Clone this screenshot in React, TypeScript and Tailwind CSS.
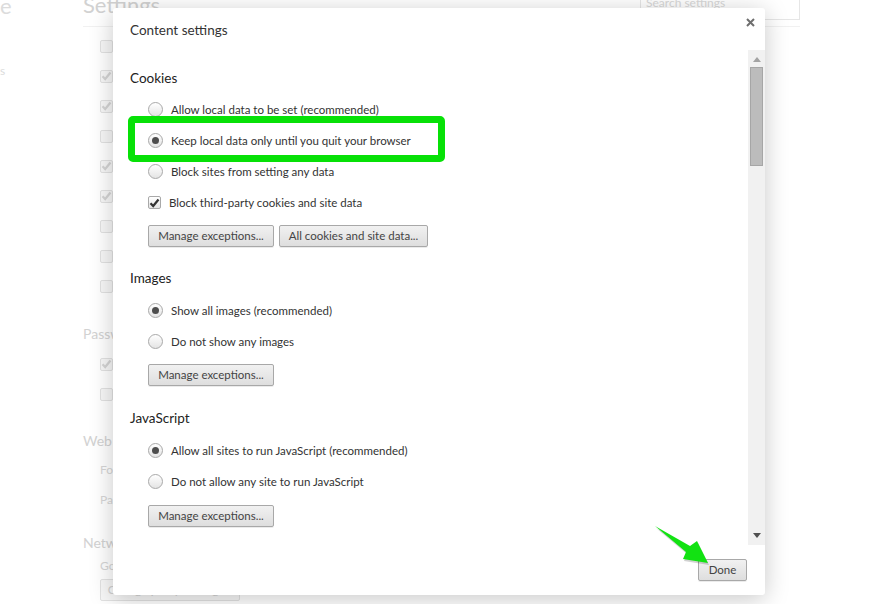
import React from "react";

function Radio({ checked }: { checked?: boolean }) {
  return (
    <span className="flex h-[15px] w-[15px] shrink-0 items-center justify-center rounded-full border border-[#a9a9a9] bg-linear-to-b from-white to-[#e4e4e4]">
      {checked && <span className="h-[7px] w-[7px] rounded-full bg-[#4d4d4d]" />}
    </span>
  );
}

function Check({ checked }: { checked?: boolean }) {
  return (
    <span className="flex h-[13px] w-[13px] shrink-0 items-center justify-center rounded-[2px] border border-[#a9a9a9] bg-linear-to-b from-white to-[#e4e4e4]">
      {checked && (
        <svg width="11" height="10" viewBox="0 0 11 10">
          <path d="M1.5 5.2 L4.2 8 L9.5 1.5" fill="none" stroke="#333" strokeWidth="2.2" />
        </svg>
      )}
    </span>
  );
}

function BgCheck({ checked }: { checked?: boolean }) {
  return (
    <div className="flex h-[30px] items-center">
      <span className="flex h-[13px] w-[13px] items-center justify-center rounded-[2px] border border-[#e2e2e2] bg-[#f7f7f7]">
        {checked && (
          <svg width="11" height="10" viewBox="0 0 11 10">
            <path d="M1.5 5.2 L4.2 8 L9.5 1.5" fill="none" stroke="#d4d4d4" strokeWidth="2.2" />
          </svg>
        )}
      </span>
      <span className="ml-[8px] text-[12px] text-[#d6d6d6]">Setting option</span>
    </div>
  );
}

function Btn({ children, w }: { children: React.ReactNode; w: string }) {
  return (
    <button
      className={`flex h-[22px] ${w} items-center justify-center rounded-[2px] border border-[#a8a8a8] bg-linear-to-b from-[#f1f1f1] to-[#dedede] text-[11.5px] text-[#444] shadow-[0_1px_0_rgba(0,0,0,0.08)]`}
    >
      {children}
    </button>
  );
}

function RadioRow({ label, checked }: { label: string; checked?: boolean }) {
  return (
    <div className="flex h-[31px] items-center pl-[18px]">
      <Radio checked={checked} />
      <span className="ml-[8px] text-[11.5px] text-[#333]">{label}</span>
    </div>
  );
}

function Heading({ children }: { children: React.ReactNode }) {
  return <div className="h-[20px] text-[13.5px] leading-[20px] text-[#222]">{children}</div>;
}

export default function App() {
  return (
    <div className="relative h-[604px] w-[885px] overflow-hidden bg-white font-['Lato',sans-serif]">
      {/* Background settings page (faded) */}
      <div className="flex">
        <div className="w-[83px] shrink-0">
          <div className="mt-[-9px] text-[22px] leading-[30px] text-[#dcdcdc]">e</div>
          <div className="mt-[41px] text-[12px] text-[#dcdcdc]">s</div>
        </div>
        <div className="w-[717px]">
          <div className="flex h-[27px] items-start justify-between border-b border-[#f1f1f1]">
            <div className="mt-[-10px] text-[22px] leading-[30px] text-[#d2d2d2]">Settings</div>
            <div className="mt-[-1px] flex h-[21px] w-[160px] items-center border border-[#e6e6e6] pl-[5px] text-[12px] text-[#d8d8d8]">
              <span className="mt-[-14px]">Search settings</span>
            </div>
          </div>
          <div className="pl-[17px] pt-[4px]">
            <BgCheck />
            <BgCheck checked />
            <BgCheck checked />
            <BgCheck />
            <BgCheck checked />
            <BgCheck checked />
            <BgCheck />
            <BgCheck />
            <BgCheck />
          </div>
          <div className="mt-[23px] h-[20px] text-[14px] leading-[20px] text-[#d2d2d2]">Passwords and forms</div>
          <div className="mt-[5px] pl-[17px]">
            <BgCheck checked />
            <BgCheck />
          </div>
          <div className="mt-[22px] h-[20px] text-[14px] leading-[20px] text-[#d2d2d2]">Web content</div>
          <div className="mt-[4px] pl-[17px] text-[12px] text-[#d6d6d6]">
            <div className="flex h-[30px] items-center">Font size:</div>
            <div className="flex h-[30px] items-center">Page zoom:</div>
          </div>
          <div className="mt-[18px] h-[20px] text-[14px] leading-[20px] text-[#d2d2d2]">Network</div>
          <div className="mt-[3px] pl-[17px]">
            <div className="flex h-[20px] items-center text-[12px] text-[#d6d6d6]">Google Chrome is using your computer's system proxy settings</div>
            <div className="mt-[3px] flex h-[22px] w-[140px] items-center justify-center rounded-[2px] border border-[#e2e2e2] bg-[#f7f7f7] text-[12px] text-[#d0d0d0]">
              Change proxy settings...
            </div>
          </div>
        </div>
      </div>

      {/* Dialog */}
      <div className="absolute left-[113px] top-[8px] flex h-[587px] w-[652px] flex-col rounded-[3px] bg-white shadow-[0_4px_24px_rgba(0,0,0,0.22)]">
        <div className="relative h-[42px] shrink-0 pl-[17px] pt-[12px]">
          <div className="text-[13.5px] leading-[20px] text-[#333]">Content settings</div>
          <svg className="absolute right-[10px] top-[10px]" width="9" height="9" viewBox="0 0 9 9">
            <path d="M1 1 L8 8 M8 1 L1 8" stroke="#6e6e6e" strokeWidth="2" />
          </svg>
        </div>
        <div className="flex h-[495px] shrink-0">
          <div className="flex-1 overflow-hidden pl-[17px] pt-[18px]">
            <Heading>Cookies</Heading>
            <div className="mt-[6px]">
              <RadioRow label="Allow local data to be set (recommended)" />
              <RadioRow label="Keep local data only until you quit your browser" checked />
              <RadioRow label="Block sites from setting any data" />
              <div className="flex h-[31px] items-center pl-[18px]">
                <Check checked />
                <span className="ml-[8px] text-[11.5px] text-[#333]">Block third-party cookies and site data</span>
              </div>
            </div>
            <div className="ml-[18px] mt-[7px] flex gap-[5px]">
              <Btn w="w-[126px]">Manage exceptions...</Btn>
              <Btn w="w-[149px]">All cookies and site data...</Btn>
            </div>

            <div className="mt-[21px]">
              <Heading>Images</Heading>
            </div>
            <div className="mt-[7px]">
              <RadioRow label="Show all images (recommended)" checked />
              <RadioRow label="Do not show any images" />
            </div>
            <div className="ml-[18px] mt-[7px] flex">
              <Btn w="w-[126px]">Manage exceptions...</Btn>
            </div>

            <div className="mt-[22px]">
              <Heading>JavaScript</Heading>
            </div>
            <div className="mt-[7px]">
              <RadioRow label="Allow all sites to run JavaScript (recommended)" checked />
              <RadioRow label="Do not allow any site to run JavaScript" />
            </div>
            <div className="ml-[18px] mt-[8px] flex">
              <Btn w="w-[126px]">Manage exceptions...</Btn>
            </div>

            <div className="mt-[22px]">
              <Heading>Handlers</Heading>
            </div>
          </div>
          {/* Scrollbar */}
          <div className="flex w-[17px] shrink-0 flex-col items-center bg-[#f1f1f1]">
            <svg className="mt-[7px]" width="8" height="5" viewBox="0 0 8 5">
              <path d="M0 5 L4 0 L8 5 Z" fill="#a3a3a3" />
            </svg>
            <div className="mt-[5px] h-[99px] w-[13px] border border-[#a6a6a6] bg-[#bcbcbc]" />
            <div className="flex-1" />
            <svg className="mb-[7px]" width="8" height="5" viewBox="0 0 8 5">
              <path d="M0 0 L8 0 L4 5 Z" fill="#505050" />
            </svg>
          </div>
        </div>
        <div className="flex flex-1 items-start justify-end pr-[18px] pt-[14px]">
          <Btn w="w-[49px]">Done</Btn>
        </div>
      </div>

      {/* Green highlight annotation */}
      <div className="absolute left-[128px] top-[116px] h-[46px] w-[317px] rounded-[5px] border-[7px] border-[#07e107]" />

      {/* Green arrow annotation */}
      <svg className="absolute left-[650px] top-[520px]" width="66" height="50" viewBox="0 0 66 50">
        <polygon points="6,8 41,28 48,23 59,45 34,41 37,34" fill="rgba(0,0,0,0.18)" />
        <polygon points="5,6 40,26 47,21 58,43 33,39 36,32" fill="#12e212" />
      </svg>
    </div>
  );
}
